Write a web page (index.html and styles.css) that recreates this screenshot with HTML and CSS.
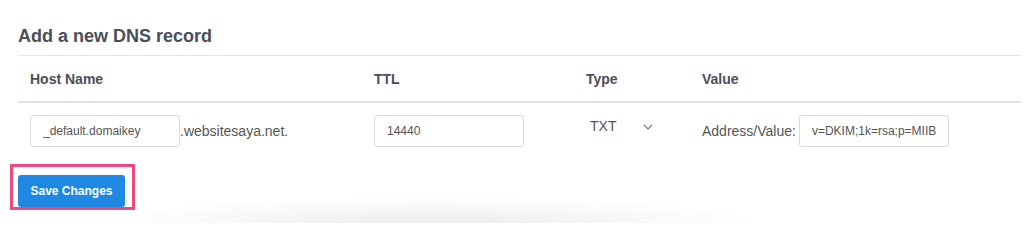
FILE: index.html
```html
<!DOCTYPE html>
<html>
<head>
<meta charset="utf-8">
<link rel="stylesheet" href="styles.css">
</head>
<body>
<div class="page">
  <h2 class="title">Add a new DNS record</h2>
  <div class="table">
    <div class="row head">
      <div class="cell">Host Name</div>
      <div class="cell">TTL</div>
      <div class="cell">Type</div>
      <div class="cell">Value</div>
    </div>
    <div class="row body">
      <div class="cell host">
        <input class="field" type="text" value="_default.domaikey">
        <span class="suffix">.websitesaya.net.</span>
      </div>
      <div class="cell">
        <input class="field" type="text" value="14440">
      </div>
      <div class="cell type">
        <span class="type-val">TXT</span>
        <svg class="chev" width="10" height="6" viewBox="0 0 10 6"><path d="M1 1 L5 5 L9 1" fill="none" stroke="#777" stroke-width="1.1"/></svg>
      </div>
      <div class="cell value">
        <span class="label">Address/Value:</span>
        <input class="field" type="text" value="v=DKIM;1k=rsa;p=MIIB">
      </div>
    </div>
  </div>
  <div class="actions">
    <span class="save-wrap"><button class="save">Save Changes</button></span>
  </div>
</div>
</body>
</html>
```
FILE: styles.css
```css
html, body {
  margin: 0;
  padding: 0;
  background: #fff;
  font-family: "Liberation Sans", Arial, Helvetica, sans-serif;
  overflow: hidden;
}
.page {
  padding: 0 3px 0 18px;
  width: 1003px;
}
.title {
  margin: 0;
  padding: 25px 0 8px;
  font-size: 18px;
  line-height: 22px;
  font-weight: 700;
  color: #4a4e58;
}
.table {
  border-top: 1px solid #e6e6e6;
}
.row {
  display: grid;
  grid-template-columns: 344px 212px 116px 1fr;
}
.head {
  height: 45px;
  align-items: center;
  border-bottom: 2px solid #e4e4e4;
}
.head .cell {
  padding-left: 12px;
  font-size: 14px;
  font-weight: 700;
  color: #4b4f58;
}
.body {
  padding-top: 12px;
  align-items: start;
}
.body .cell {
  padding-left: 12px;
  display: flex;
  align-items: center;
  height: 32px;
}
.field {
  box-sizing: border-box;
  width: 150px;
  height: 32px;
  margin: 0;
  border: 1px solid #dcdcdc;
  border-radius: 3px;
  padding: 0 12px;
  font-family: "Liberation Sans", Arial, sans-serif;
  font-size: 12px;
  color: #555;
  background: #fff;
  outline: none;
}
.suffix {
  font-size: 14px;
  color: #555;
}
.type {
  padding-left: 16px !important;
  align-items: flex-start !important;
}
.type-val {
  font-size: 14px;
  color: #555;
  line-height: 16px;
  margin-top: 3px;
}
.chev {
  margin-left: 27px;
  margin-top: 9px;
}
.value .label {
  font-size: 14px;
  color: #555;
  margin-right: 3px;
}
.value .field {
  width: 150px;
}
.actions {
  height: 76px;
  padding-top: 28px;
  box-sizing: border-box;
  margin-left: -18px;
  padding-left: 18px;
  background: radial-gradient(ellipse 330px 26px at 432px 100%, rgba(0,0,0,0.075), rgba(0,0,0,0) 100%) no-repeat;
}
.save-wrap {
  position: relative;
  display: inline-block;
}
.save-wrap::after {
  content: "";
  position: absolute;
  top: -11px;
  left: -8px;
  right: -10px;
  bottom: -3px;
  border: 3px solid #ea4a7e;
  pointer-events: none;
}
.save {
  display: block;
  width: 107px;
  height: 32px;
  border: none;
  border-radius: 3px;
  background: #1f88e3;
  color: #fff;
  font-family: "Liberation Sans", Arial, sans-serif;
  font-size: 12px;
  font-weight: 700;
  padding: 0;
}
```
